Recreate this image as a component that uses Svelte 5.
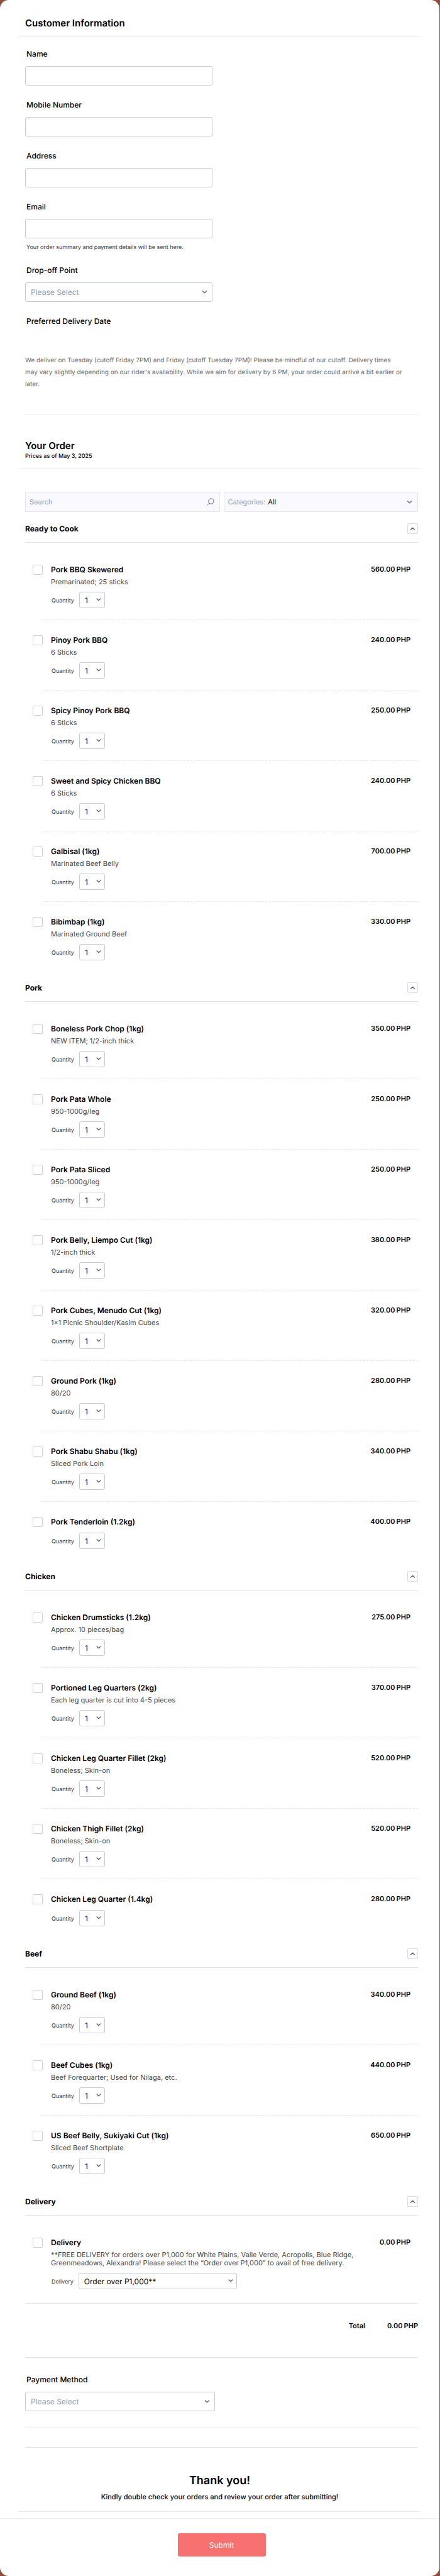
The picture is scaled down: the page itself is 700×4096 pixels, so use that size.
<script lang="ts">
  type Item = { name: string; desc?: string; price: string };
  type Group = { title: string; items: Item[] };

  const groups: Group[] = [
    {
      title: 'Ready to Cook',
      items: [
        { name: 'Pork BBQ Skewered', desc: 'Premarinated; 25 sticks', price: '560.00' },
        { name: 'Pinoy Pork BBQ', desc: '6 Sticks', price: '240.00' },
        { name: 'Spicy Pinoy Pork BBQ', desc: '6 Sticks', price: '250.00' },
        { name: 'Sweet and Spicy Chicken BBQ', desc: '6 Sticks', price: '240.00' },
        { name: 'Galbisal (1kg)', desc: 'Marinated Beef Belly', price: '700.00' },
        { name: 'Bibimbap (1kg)', desc: 'Marinated Ground Beef', price: '330.00' },
      ],
    },
    {
      title: 'Pork',
      items: [
        { name: 'Boneless Pork Chop (1kg)', desc: 'NEW ITEM; 1/2-inch thick', price: '350.00' },
        { name: 'Pork Pata Whole', desc: '950-1000g/leg', price: '250.00' },
        { name: 'Pork Pata Sliced', desc: '950-1000g/leg', price: '250.00' },
        { name: 'Pork Belly, Liempo Cut (1kg)', desc: '1/2-inch thick', price: '380.00' },
        { name: 'Pork Cubes, Menudo Cut (1kg)', desc: '1x1 Picnic Shoulder/Kasim Cubes', price: '320.00' },
        { name: 'Ground Pork (1kg)', desc: '80/20', price: '280.00' },
        { name: 'Pork Shabu Shabu (1kg)', desc: 'Sliced Pork Loin', price: '340.00' },
        { name: 'Pork Tenderloin (1.2kg)', price: '400.00' },
      ],
    },
    {
      title: 'Chicken',
      items: [
        { name: 'Chicken Drumsticks (1.2kg)', desc: 'Approx. 10 pieces/bag', price: '275.00' },
        { name: 'Portioned Leg Quarters (2kg)', desc: 'Each leg quarter is cut into 4-5 pieces', price: '370.00' },
        { name: 'Chicken Leg Quarter Fillet (2kg)', desc: 'Boneless; Skin-on', price: '520.00' },
        { name: 'Chicken Thigh Fillet (2kg)', desc: 'Boneless; Skin-on', price: '520.00' },
        { name: 'Chicken Leg Quarter (1.4kg)', price: '280.00' },
      ],
    },
    {
      title: 'Beef',
      items: [
        { name: 'Ground Beef (1kg)', desc: '80/20', price: '340.00' },
        { name: 'Beef Cubes (1kg)', desc: 'Beef Forequarter; Used for Nilaga, etc.', price: '440.00' },
        { name: 'US Beef Belly, Sukiyaki Cut (1kg)', desc: 'Sliced Beef Shortplate', price: '650.00' },
      ],
    },
    {
      title: 'Delivery',
      items: [
        {
          name: 'Delivery',
          desc: '**FREE DELIVERY for orders over P1,000 for White Plains, Valle Verde, Acropolis, Blue Ridge, Greenmeadows, Alexandra! Please select the “Order over P1,000” to avail of free delivery.',
          price: '0.00',
        },
      ],
    },
  ];

  const quantities = [1, 2, 3, 4, 5, 6, 7, 8, 9, 10];

  let open = $state(groups.map(() => true));
</script>

{#snippet chevron(up = false)}
  <svg class="chevron" class:up viewBox="0 0 10 6" aria-hidden="true">
    <path d="M1.4 1.2 5 4.6 8.6 1.2" fill="none" stroke="currentColor" stroke-width="1.7" stroke-linecap="round" stroke-linejoin="round" />
  </svg>
{/snippet}

<form class="card" onsubmit={(e) => e.preventDefault()}>
  <header class="section-head">
    <h2>Customer Information</h2>
  </header>

  <div class="fields">
    <div class="field">
      <label for="name">Name</label>
      <input id="name" type="text" />
    </div>
    <div class="field">
      <label for="mobile">Mobile Number</label>
      <input id="mobile" type="tel" />
    </div>
    <div class="field">
      <label for="address">Address</label>
      <input id="address" type="text" />
    </div>
    <div class="field">
      <label for="email">Email</label>
      <input id="email" type="email" aria-describedby="email-hint" />
      <small id="email-hint">Your order summary and payment details will be sent here.</small>
    </div>
    <div class="field">
      <label for="dropoff">Drop-off Point</label>
      <span class="select">
        <select id="dropoff" class="empty"><option>Please Select</option></select>
        {@render chevron()}
      </span>
    </div>
    <div class="field">
      <span class="label">Preferred Delivery Date</span>
    </div>
  </div>

  <p class="note">
    We deliver on Tuesday (cutoff Friday 7PM) and Friday (cutoff Tuesday 7PM)! Please be mindful of
    our cutoff. Delivery times may vary slightly depending on our rider's availability. While we aim
    for delivery by 6 PM, your order could arrive a bit earlier or later.
  </p>

  <hr />

  <header class="section-head order-head">
    <h2>Your Order</h2>
    <p>Prices as of May 3, 2025</p>
  </header>

  <div class="filters">
    <div class="filter">
      <input type="search" placeholder="Search" aria-label="Search" />
      <svg class="magnifier" viewBox="0 0 12 12" aria-hidden="true">
        <circle cx="6.9" cy="5" r="4.1" fill="none" stroke="currentColor" />
        <path d="M4 8 1 11.2" stroke="currentColor" stroke-linecap="round" />
      </svg>
    </div>
    <div class="filter">
      <label for="category">Categories:</label>
      <select id="category">
        <option>All</option>
        {#each groups as group}
          <option>{group.title}</option>
        {/each}
      </select>
      {@render chevron()}
    </div>
  </div>

  {#each groups as group, g}
    <section>
      <div class="group-head">
        <h3>{group.title}</h3>
        <button type="button" class="toggle" aria-label="Toggle {group.title}" aria-expanded={open[g]} onclick={() => (open[g] = !open[g])}>
          {@render chevron(open[g])}
        </button>
      </div>
      {#if open[g]}
        <ul class="items">
          {#each group.items as item, i}
            <li>
              <input type="checkbox" id="item-{g}-{i}" />
              <div class="info">
                <label class="name" for="item-{g}-{i}">{item.name}</label>
                {#if item.desc}<p class="desc">{item.desc}</p>{/if}
                <div class="option">
                  {#if group.title === 'Delivery'}
                    <label for="qty-{g}-{i}">Delivery</label>
                    <span class="select wide">
                      <select id="qty-{g}-{i}"><option>Order over P1,000**</option></select>
                      {@render chevron()}
                    </span>
                  {:else}
                    <label for="qty-{g}-{i}">Quantity</label>
                    <span class="select">
                      <select id="qty-{g}-{i}">
                        {#each quantities as n}<option>{n}</option>{/each}
                      </select>
                      {@render chevron()}
                    </span>
                  {/if}
                </div>
              </div>
              <div class="price"><span>{item.price}</span><span>PHP</span></div>
            </li>
          {/each}
        </ul>
      {/if}
    </section>
  {/each}

  <div class="total">
    <span>Total</span>
    <div class="price"><span>0.00</span><span>PHP</span></div>
  </div>

  <hr />

  <div class="payment field">
    <label for="payment">Payment Method</label>
    <span class="select">
      <select id="payment" class="empty"><option>Please Select</option></select>
      {@render chevron()}
    </span>
  </div>

  <hr />
  <hr class="second" />

  <header class="section-head thanks">
    <h1>Thank you!</h1>
    <p>Kindly double check your orders and review your order after submitting!</p>
  </header>

  <footer>
    <button type="submit">Submit</button>
  </footer>
</form>

<style>
  :global(body) {
    background: #8f4f3b;
  }

  .card {
    margin-right: 1px;
    background: #fff;
    border-radius: 14px;
    color: #000;
    font-family: Inter, 'Liberation Sans', sans-serif;
    font-size: 12px;
    text-rendering: geometricPrecision;
    overflow: hidden;
  }

  h1, h2, h3, p, ul {
    margin: 0;
    padding: 0;
  }

  input, select, button {
    box-sizing: border-box;
    margin: 0;
    font: inherit;
    color: inherit;
    text-rendering: inherit;
  }

  hr {
    margin: 0 34px 0 40px;
    border: 0;
    border-top: 1px solid #e6e6ea;
  }

  .section-head {
    margin: 0 29px;
    padding: 27px 11px 11px;
    border-bottom: 1px solid #ececee;
  }

  h2 {
    font-size: 15px;
    line-height: 20px;
    font-weight: 600;
  }

  .fields {
    display: flex;
    flex-direction: column;
    gap: 22px;
    padding: 18px 40px 0;
  }

  .field {
    display: flex;
    flex-direction: column;
    align-items: flex-start;
  }

  .field label,
  .label {
    padding-left: 2px;
    font-weight: 500;
    line-height: 17px;
  }

  .field input,
  .field .select {
    width: 298px;
    max-width: 100%;
    height: 31px;
    margin-top: 11px;
  }

  .field input,
  .select select {
    border: 1px solid #c3cad8;
    border-radius: 3px;
    background: #fff;
  }

  .field small {
    margin-top: 9px;
    padding-left: 2px;
    font-size: 9px;
    line-height: 11px;
    color: #2c3345;
  }

  .select {
    position: relative;
    display: inline-block;
    box-sizing: border-box;
  }

  select {
    appearance: none;
  }

  .select select {
    width: 100%;
    height: 100%;
    padding: 0 22px 0 8px;
  }

  select.empty {
    color: #8d9db0;
  }

  .chevron {
    width: 9px;
    height: 5px;
    color: #57647e;
  }

  .chevron.up {
    transform: rotate(180deg);
  }

  .select .chevron {
    position: absolute;
    right: 8px;
    top: 50%;
    margin-top: -3px;
    pointer-events: none;
  }

  .note {
    max-width: 604px;
    margin: 45px 34px 37px 40px;
    font-size: 10px;
    line-height: 19px;
    color: #666;
  }

  .order-head {
    padding-top: 40px;
  }

  .order-head p {
    font-size: 9px;
    line-height: 14px;
    font-weight: 500;
  }

  .filters {
    display: grid;
    grid-template-columns: 1fr 1fr;
    gap: 6px;
    margin: 37px 34px 2px 40px;
  }

  .filter {
    display: flex;
    align-items: center;
    height: 32px;
    box-sizing: border-box;
    padding: 0 8px 0 6px;
    border: 1px solid #e3e6f2;
    background: #f9f9ff;
    font-size: 11px;
  }

  .filter label {
    color: #8d9db0;
  }

  .filter input,
  .filter select {
    flex: 1;
    min-width: 0;
    height: 100%;
    padding: 0;
    border: 0;
    background: none;
  }

  .filter select {
    padding-left: 4px;
  }

  .filter input::placeholder {
    color: #8d9db0;
    opacity: 1;
  }

  .magnifier {
    width: 12px;
    height: 12px;
    color: #6f7076;
  }

  .group-head {
    display: flex;
    align-items: center;
    justify-content: space-between;
    margin: 0 34px 0 40px;
    padding: 16px 0 13px;
    border-bottom: 1px solid #e0e2ec;
  }

  h3 {
    font-size: 12px;
    line-height: 17px;
    font-weight: 700;
  }

  .toggle {
    display: grid;
    place-items: center;
    width: 17px;
    height: 17px;
    padding: 0;
    border: 1px solid #d9dce6;
    border-radius: 2px;
    background: #fff;
  }

  .items {
    margin: 0 34px 0 68px;
    padding-top: 11px;
    list-style: none;
  }

  .items li {
    display: flex;
    align-items: flex-start;
    gap: 13px;
    padding: 24px 12px 18px 0;
    border-bottom: 1px dashed #e6e6ea;
  }

  .items li:last-child {
    border-color: transparent;
  }

  input[type='checkbox'] {
    appearance: none;
    flex: none;
    width: 16px;
    height: 16px;
    margin-left: -16px;
    border: 1px solid #cdd2dd;
    border-radius: 2px;
    background: #fff;
  }

  input[type='checkbox']:checked {
    background: #57647e;
  }

  .info {
    flex: 1;
    max-width: 490px;
  }

  .name {
    display: block;
    font-size: 12px;
    line-height: 16px;
    font-weight: 600;
  }

  .desc {
    margin-top: 5px;
    font-size: 11px;
    line-height: 13px;
    color: #444;
  }

  .option {
    display: flex;
    align-items: center;
    gap: 8px;
    margin-top: 9px;
    padding-left: 1px;
  }

  .option label {
    padding-top: 2px;
    font-size: 9px;
    color: #2c3345;
  }

  .option .select {
    width: 41px;
    height: 26px;
  }

  .option .select.wide {
    width: 252px;
  }

  .option .chevron {
    right: 6px;
    width: 8px;
  }

  .price {
    display: flex;
    gap: 2px;
    margin-left: auto;
    font-size: 11px;
    line-height: 15px;
    font-weight: 600;
  }

  .total {
    display: flex;
    margin: 3px 34px 0 40px;
    padding: 28px 0 42px;
    border-top: 1px solid #e6e6ea;
    font-size: 11px;
    font-weight: 600;
    line-height: 15px;
  }

  .total > span {
    margin-left: auto;
  }

  .total .price {
    margin-left: 35px;
  }

  .payment {
    padding: 26px 40px;
  }

  .payment .select {
    width: 302px;
  }

  .second {
    margin-top: 30px;
  }

  .thanks {
    padding-top: 39px;
    padding-bottom: 12px;
    text-align: center;
  }

  h1 {
    font-size: 18px;
    line-height: 28px;
    font-weight: 600;
  }

  .thanks p {
    font-size: 11px;
    line-height: 22px;
    font-weight: 500;
  }

  footer {
    display: flex;
    justify-content: center;
    margin-top: 10px;
    padding: 23px 34px 31px 40px;
    border-top: 1px solid #ececf8;
  }

  footer button {
    width: 140px;
    height: 37px;
    border: 0;
    border-radius: 3px;
    background: #f87171;
    color: #fff;
    font-size: 12px;
  }
</style>
